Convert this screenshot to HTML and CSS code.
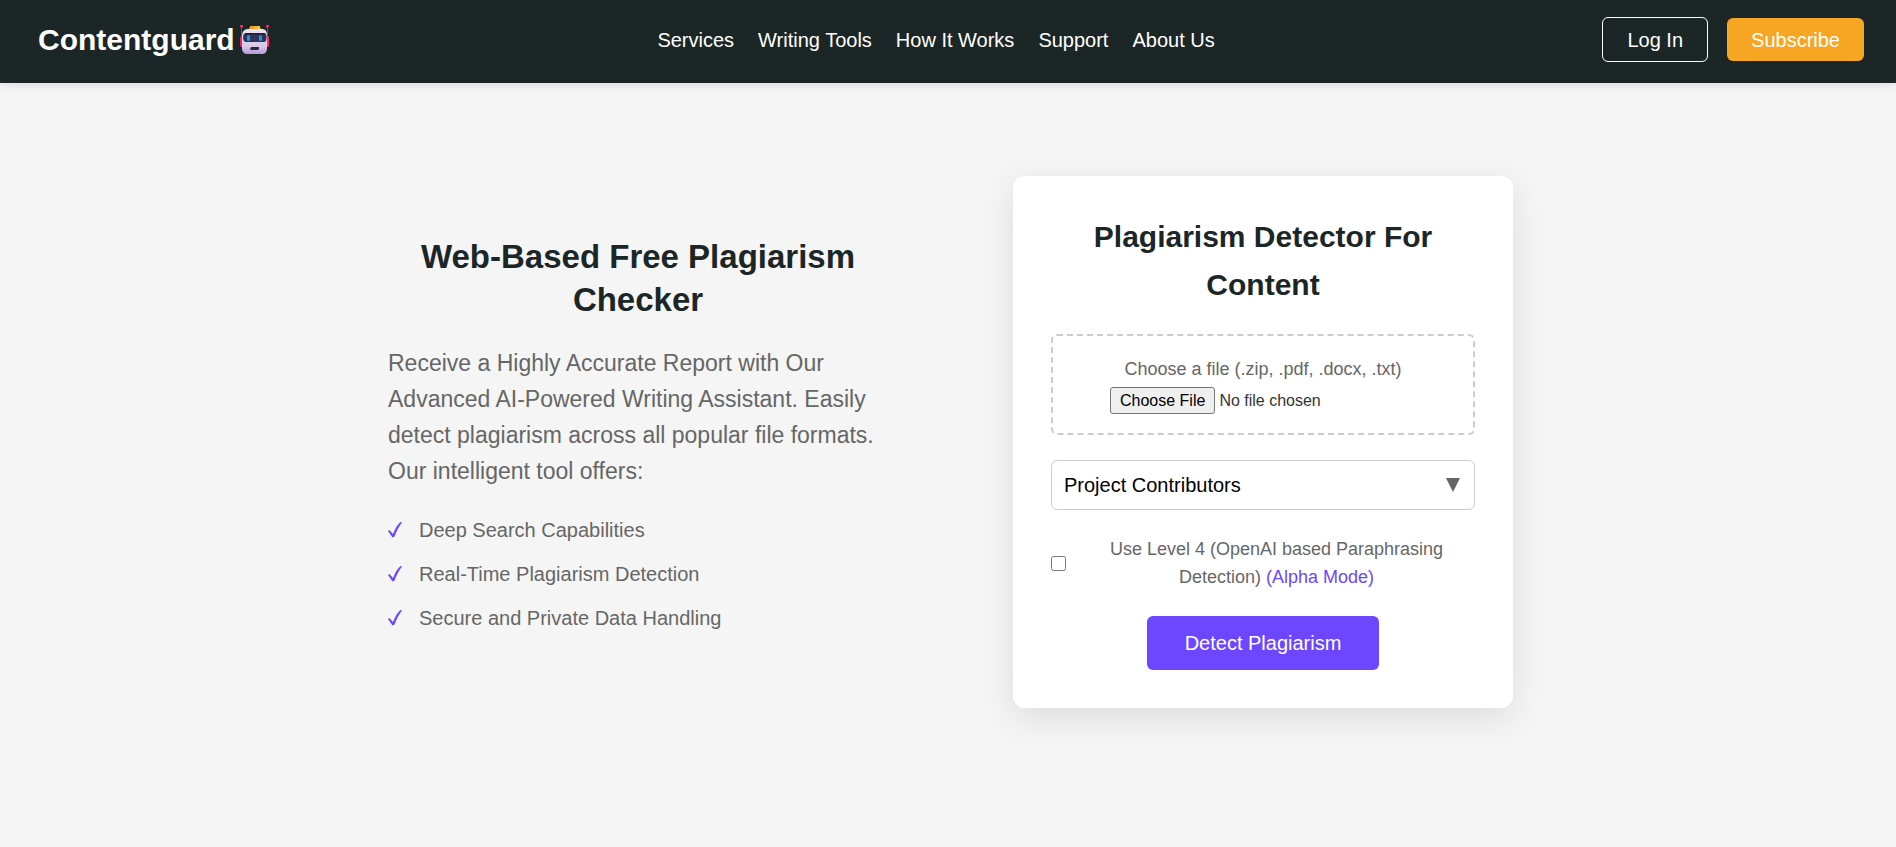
FILE: index.html
```html
<!DOCTYPE html>
<html lang="en">
<head>
<meta charset="utf-8">
<meta name="viewport" content="width=device-width, initial-scale=1">
<title>Contentguard</title>
<link rel="stylesheet" href="styles.css">
</head>
<body>
<header class="header">
  <a class="logo" href="#">Contentguard
    <svg class="logo-icon" viewBox="0 0 30 30" aria-hidden="true">
      <defs>
        <linearGradient id="face" x1="0" y1="0" x2="0" y2="1"><stop offset="0" stop-color="#eee6f3"/><stop offset=".7" stop-color="#d8c7e6"/><stop offset="1" stop-color="#b497dc"/></linearGradient>
        <linearGradient id="cap" x1="0" y1="0" x2="1" y2="0"><stop offset="0" stop-color="#e8901c"/><stop offset="1" stop-color="#ffd04a"/></linearGradient>
      </defs>
      <path d="M1.500 1.500v12M27.500 1.500v12" stroke="#c9285c" stroke-width="1"/>
      <rect x="0" y="0" width="3" height="2.500" rx="1" fill="#ff2f5e"/>
      <rect x="26" y="0" width="3" height="2.500" rx="1" fill="#ff2f5e"/>
      <rect x="0" y="11" width="4" height="11" rx="1.500" fill="#e0245e"/>
      <rect x="25" y="11" width="4" height="11" rx="1.500" fill="#ff2f5e"/>
      <path d="M10 1h10v1.500l1 1.500H9V2.500h1z" fill="url(#cap)"/>
      <path d="M8 4h14c4 0 5 3 5 7v12c0 4-2 6-5 6H8c-4 0-6-2-6-6V11c0-4 2-7 6-7z" fill="url(#face)"/>
      <path d="M6 8h18c2 0 2.500 2 2.500 4.500S26 17 24 17H6c-2 0-3-2-3-4.500S4 8 6 8z" fill="#35305a"/>
      <path d="M6 8h18l1.500 1.500h-21z" fill="#211c35"/>
      <rect x="7" y="10" width="3" height="6" rx="1.500" fill="#199be2"/>
      <rect x="19" y="10" width="3" height="6" rx="1.500" fill="#199be2"/>
      <path d="M11 22h8v2l-1 1h-7l-1-1z" fill="#302641"/>
    </svg>
  </a>
  <nav class="nav">
    <a href="#">Services</a>
    <a href="#">Writing Tools</a>
    <a href="#">How It Works</a>
    <a href="#">Support</a>
    <a href="#">About Us</a>
  </nav>
  <div class="actions">
    <button class="btn btn-outline" type="button">Log In</button>
    <button class="btn btn-accent" type="button">Subscribe</button>
  </div>
</header>
<main class="main">
  <section class="intro">
    <h1 class="intro-title">Web-Based Free Plagiarism Checker</h1>
    <p class="intro-text">Receive a Highly Accurate Report with Our Advanced AI-Powered Writing Assistant. Easily detect plagiarism across all popular file formats. Our intelligent tool offers:</p>
    <ul class="features">
      <li><svg class="check" viewBox="0 0 14 16" aria-hidden="true"><path d="M0 9 1.500 8 5 12C7 7 9 3 12.500 0L14 .5C11 4.500 8.500 9 6.500 14.500L4.500 15.500z"/></svg>Deep Search Capabilities</li>
      <li><svg class="check" viewBox="0 0 14 16" aria-hidden="true"><path d="M0 9 1.500 8 5 12C7 7 9 3 12.500 0L14 .5C11 4.500 8.500 9 6.500 14.500L4.500 15.500z"/></svg>Real-Time Plagiarism Detection</li>
      <li><svg class="check" viewBox="0 0 14 16" aria-hidden="true"><path d="M0 9 1.500 8 5 12C7 7 9 3 12.500 0L14 .5C11 4.500 8.500 9 6.500 14.500L4.500 15.500z"/></svg>Secure and Private Data Handling</li>
    </ul>
  </section>
  <form class="card">
    <h2 class="card-title">Plagiarism Detector For Content</h2>
    <div class="upload">
      <label for="file">Choose a file (.zip, .pdf, .docx, .txt)</label>
      <input class="file" id="file" type="file" accept=".zip,.pdf,.docx,.txt">
    </div>
    <div class="select-wrap">
      <select class="select" aria-label="Project Contributors">
        <option>Project Contributors</option>
      </select>
      <svg class="arrow" viewBox="0 0 14 14" aria-hidden="true"><path d="M0 0h14L7 14z"/></svg>
    </div>
    <div class="option">
      <input class="checkbox" id="level" type="checkbox">
      <label for="level">Use Level 4 (OpenAI based Paraphrasing Detection) <span class="alpha">(Alpha Mode)</span></label>
    </div>
    <button class="submit" type="submit">Detect Plagiarism</button>
  </form>
</main>
</body>
</html>
```
FILE: styles.css
```css
* {
  box-sizing: border-box;
  margin: 0;
  padding: 0;
}

body {
  min-height: 100vh;
  background: #f5f5f5;
  color: #666;
  font-family: Arial, "Liberation Sans", sans-serif;
  font-size: 20px;
  line-height: 30px;
}

button,
select {
  font: inherit;
}

.header {
  display: flex;
  align-items: center;
  justify-content: space-between;
  padding: 17px 32px 21px 38px;
  background: #1c2626;
  box-shadow: 0 2px 10px rgba(0, 0, 0, 0.1);
}

.logo {
  display: flex;
  align-items: center;
  gap: 5px;
  color: #fff;
  font-size: 30px;
  font-weight: 700;
  text-decoration: none;
}

.logo-icon {
  width: 30px;
  height: 30px;
}

.nav {
  display: flex;
  gap: 24px;
}

.nav a {
  color: #fff;
  text-decoration: none;
}

.actions {
  display: flex;
  align-items: center;
  gap: 19px;
}

.btn {
  padding: 7px 24px 6px;
  border: 0;
  border-radius: 6px;
  color: #fff;
}

.btn-outline {
  border: 1px solid #fff;
  background: transparent;
}

.btn-accent {
  background: #f6a623;
}

.main {
  display: flex;
  align-items: center;
  justify-content: center;
  gap: 125px;
  padding: 93px 32px 64px 37px;
}

.intro,
.card {
  flex: 0 1 500px;
}

.intro {
  padding-bottom: 2px;
}

.intro-title {
  margin-bottom: 24px;
  color: #1c2626;
  font-size: 33px;
  line-height: 43px;
  text-align: center;
}

.intro-text {
  margin-bottom: 26px;
  font-size: 23px;
  line-height: 36px;
}

.features {
  list-style: none;
}

.features li {
  display: flex;
  align-items: center;
  gap: 17px;
  margin-bottom: 14px;
}

.check {
  width: 14px;
  height: 16px;
  fill: #6c47ff;
}

.card {
  padding: 37px 38px 38px;
  border-radius: 12px;
  background: #fff;
  box-shadow: 0 10px 36px rgba(0, 0, 0, 0.1);
  text-align: center;
}

.card-title {
  margin-bottom: 25px;
  color: #1c2626;
  font-size: 30px;
  line-height: 48px;
}

.upload {
  display: flex;
  flex-direction: column;
  align-items: center;
  gap: 4px;
  margin-bottom: 25px;
  padding: 19px;
  border: 2px dashed #ccc;
  border-radius: 6px;
  font-size: 18px;
  line-height: 28px;
}

.file {
  width: 306px;
  max-width: 100%;
  color: #333;
  font-family: inherit;
  font-size: 16px;
  line-height: 20px;
}

.file::file-selector-button {
  height: 27px;
  margin-right: 4px;
  padding: 2px 9px;
  border: 1px solid #767676;
  border-radius: 3px;
  background: #efefef;
  color: #000;
  font: inherit;
}

.select-wrap {
  display: grid;
  align-items: center;
  margin-bottom: 25px;
}

.select,
.arrow {
  grid-area: 1 / 1;
}

.select {
  width: 100%;
  height: 50px;
  padding: 0 12px;
  border: 1px solid #ccc;
  border-radius: 6px;
  background: #fff;
  color: #000;
  appearance: none;
}

.arrow {
  width: 14px;
  height: 14px;
  margin-right: 15px;
  justify-self: end;
  fill: #666;
  pointer-events: none;
}

.option {
  display: flex;
  align-items: center;
  gap: 12px;
  margin-bottom: 25px;
  font-size: 18px;
  line-height: 28px;
}

.option label {
  flex: 1;
}

.checkbox {
  width: 15px;
  height: 15px;
}

.alpha {
  color: #6c47ff;
}

.submit {
  padding: 12px 38px;
  border: 0;
  border-radius: 6px;
  background: #6c47ff;
  color: #fff;
}
```
